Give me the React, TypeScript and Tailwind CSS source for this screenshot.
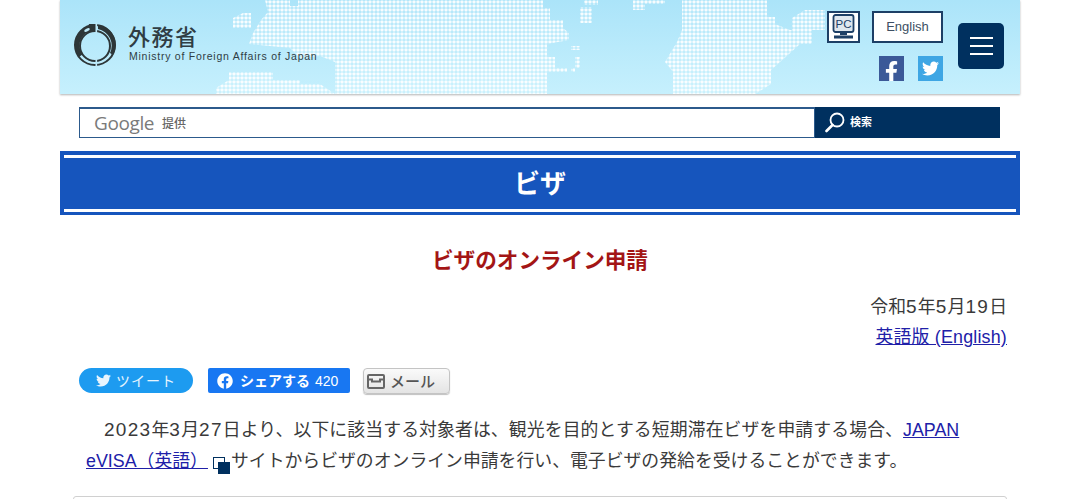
import { FaFacebook, FaFacebookF, FaTwitter } from 'react-icons/fa';

const jp = 'font-["Liberation_Sans","Noto_Sans_CJK_JP",sans-serif]';

function Num({ children }: { children: string }) {
  return <span className="text-[19px] leading-none tracking-[1.3px]">{children}</span>;
}

function WorldMap() {
  return (
    <svg className="absolute inset-0" width="960" height="94" viewBox="60 0 960 94">
      <defs>
        <pattern id="dots" x="0" y="0" width="4" height="4" patternUnits="userSpaceOnUse">
          <rect x="0.5" y="0.5" width="3" height="3" rx="0.8" fill="#fff" fillOpacity="0.9" />
        </pattern>
      </defs>
      <g fill="url(#dots)">
        <path d="M265 0H290V6H298V0H543V8H550V20H563V28L569 33V40L547 44V94H335V62L320 56L300 58L290 48L249 44L253 33L261 20L268 12Z" />
        <path d="M229 72H273V80H300V84H320L335 94H216V88L229 80Z" />
        <path d="M682 0H767V17H775V24L790 30H812V44H800L788 55L771 70V84L755 94H673V72L665 62L677 42L682 30Z" />
        <path d="M792 18L805 10H825V30H792Z" />
        <path d="M580 7H592V23H580Z" />
        <path d="M584 0H598V5H584Z" />
        <path d="M633 0H665V4H645V10H633Z" />
        <path d="M233 18L243 13H251V28H233Z" />
        <path d="M547 57H555V68H567V72H547Z" />
        <path d="M571 68H580V57H575V72H571Z" />
        <path d="M571 46H580V50H571Z" />
      </g>
    </svg>
  );
}

function Logo() {
  return (
    <svg width="44" height="46" viewBox="0 0 44 46" className="shrink-0">
      <circle cx="22" cy="24" r="20" fill="none" stroke="#2d3638" strokeWidth="2" />
      <path d="M22 4A20 20 0 0 0 6 36L10 33A14 14 0 0 1 22 10Z" fill="#2d3638" />
      <path d="M25 4A20 20 0 0 1 40 34L37 32A17 17 0 0 0 25 8Z" fill="#2d3638" />
      <circle cx="22" cy="25" r="15" fill="none" stroke="#2d3638" strokeWidth="2" />
      <path d="M16 3H23V9L13 12Z" fill="#2d3638" />
      <rect x="22.5" y="1" width="1.6" height="12" fill="#bde8f7" />
      <rect x="22.5" y="36" width="1.6" height="10" fill="#bde8f7" />
      <ellipse cx="14" cy="9" rx="3" ry="1.4" fill="#bde8f7" transform="rotate(-25 14 9)" />
    </svg>
  );
}

function MailIcon() {
  return (
    <svg width="18" height="15" viewBox="0 0 18 15" fill="none" stroke="#666" strokeWidth="2">
      <rect x="1" y="1" width="16" height="13" rx="1" />
      <path d="M1 5.5H5V7.5H13V5.5H17" />
    </svg>
  );
}

export default function App() {
  return (
    <div className={`h-[499px] overflow-hidden bg-white text-[#3a3a3a] ${jp}`}>
      <div className="mx-auto w-[960px]">
        <header className="relative flex h-[94px] items-start justify-between overflow-hidden bg-gradient-to-b from-[#abe4f9] to-[#c6f0fd] shadow-[0_1px_2px_rgba(0,0,0,0.3)]">
          <WorldMap />
          <div className="relative ml-[13px] mt-[21px] flex items-center gap-[11px]">
            <Logo />
            <div className="text-[#2f3d44]">
              <div className='-mt-[3px] font-["Noto_Sans_CJK_JP",sans-serif] text-[22px] font-medium leading-[26px] tracking-[1.5px]'>外務省</div>
              <div className="ml-[1px] mt-[1px] text-[10.5px] leading-[14px] tracking-[0.75px]">Ministry of Foreign Affairs of Japan</div>
            </div>
          </div>
          <div className="relative mr-[16px] mt-[11px] flex gap-[15px]">
            <div className="flex flex-col items-end gap-[13px]">
              <div className="flex gap-[12px]">
                <a className="flex h-[32px] w-[33px] items-center justify-center border-2 border-[#1d3f66] bg-white">
                  <svg width="25" height="27" viewBox="0 0 25 27">
                    <rect x="2.5" y="1" width="20" height="17" rx="2" fill="#dfe7ee" stroke="#1d3f66" strokeWidth="1.8" />
                    <text x="12.5" y="14" textAnchor="middle" fontSize="11.5" fill="#1d3f66" fontFamily="Liberation Sans">PC</text>
                    <rect x="9" y="18" width="7" height="3" fill="#1d3f66" />
                    <rect x="3" y="21.5" width="19" height="3" fill="#1d3f66" />
                  </svg>
                </a>
                <a className="flex h-[32px] w-[71px] items-center justify-center border-2 border-[#1d3f66] bg-white text-[13px] text-[#3d4f63]">English</a>
              </div>
              <div className="flex gap-[14px]">
                <a className="flex h-[25px] w-[25px] items-end justify-center overflow-hidden bg-[#3b5998] text-white">
                  <FaFacebookF className="h-[21px] w-[21px] translate-y-[1px]" />
                </a>
                <a className="flex h-[25px] w-[25px] items-center justify-center bg-[#3ea6e4] text-white">
                  <FaTwitter className="h-[17px] w-[17px]" />
                </a>
              </div>
            </div>
            <button className="mt-[12px] flex h-[46px] w-[46px] flex-col items-center justify-center gap-[6px] rounded-[5px] bg-[#00305f]">
              <span className="h-[2px] w-[23px] bg-white" />
              <span className="h-[2px] w-[23px] bg-white" />
              <span className="h-[2px] w-[23px] bg-white" />
            </button>
          </div>
        </header>

        <form className="ml-[19px] mr-[20px] mt-[13px] flex h-[31px]">
          <div className="flex flex-1 items-center gap-[8px] border border-t-2 border-[#2c5a8c] bg-white pl-[14px]">
            <span className='font-["Open_Sans",sans-serif] text-[19px] tracking-[-0.4px] text-[#7a7a7a]'>Google</span>
            <span className='font-["Noto_Sans_CJK_JP",sans-serif] text-[12px] font-medium text-[#666]'>提供</span>
          </div>
          <button className="flex w-[185px] items-center gap-[5px] bg-[#00305f] pl-[10px] text-[11px] font-bold text-white">
            <svg width="20" height="21" viewBox="0 0 20 21" fill="none" stroke="#fff">
              <circle cx="12" cy="8" r="6.5" strokeWidth="1.8" />
              <path d="M7.5 13L1.5 19" strokeWidth="2.6" strokeLinecap="round" />
            </svg>
            検索
          </button>
        </form>

        <div className="mt-[13px] bg-[#1655bd] px-[4px] pb-[3px] pt-[4px]">
          <h1 className="flex h-[57px] items-center justify-center border-y-[3px] border-white pt-[1px] text-[26px] font-bold text-white">ビザ</h1>
        </div>

        <h2 className="mt-[30px] text-center text-[21.6px] font-bold leading-[32px] text-[#a31515]">ビザのオンライン申請</h2>

        <div className="mt-[15px] pl-[26px] pr-[13px] text-[17.85px] leading-[30px]">
          <p className="text-right">令和<Num>5</Num>年<Num>5</Num>月<Num>19</Num>日</p>
          <p className="text-right tracking-[0.2px]"><a className="text-[#2020a8] underline">英語版 (English)</a></p>

          <div className="-ml-[7px] mt-[16px] flex h-[26px] items-start">
            <a className="flex h-[25px] w-[114px] items-center justify-center gap-[5px] rounded-full bg-[#1d9bf0] text-[14px] leading-none tracking-[1px] text-white/90">
              <FaTwitter className="h-[15px] w-[15px]" />
              ツイート
            </a>
            <a className="ml-[15px] flex h-[25px] w-[142px] items-center gap-[7px] rounded-[2px] bg-[#1877f2] pl-[9px] text-[14px] font-bold leading-none text-white">
              <FaFacebook className="h-[16px] w-[16px]" />
              シェアする
              <span className="-ml-[2px] text-[14px] font-normal">420</span>
            </a>
            <a className="ml-[13px] flex h-[26px] w-[87px] items-center gap-[5px] rounded-[4px] border border-[#c4c4c4] bg-gradient-to-b from-[#fafafa] to-[#e4e4e4] pl-[3px] text-[15px] font-medium leading-none text-[#555] shadow-[0_1px_1px_rgba(0,0,0,0.25)]">
              <MailIcon />
              メール
            </a>
          </div>

          <p className="mt-[21px] w-[880px] indent-[18px] leading-[31px]">
            <Num>2023</Num>年<Num>3</Num>月<Num>27</Num><span className="tracking-[0.1px]">日より、以下に該当する対象者は、観光を目的とする短期滞在ビザを申請する場合、</span><a className="text-[#2020a8] underline">JAPAN eVISA（英語）</a>
            <span className="relative ml-[5px] mr-[1px] inline-block h-[17px] w-[17px] align-[-7px]">
              <span className="absolute left-0 top-0 h-[12px] w-[12px] border border-[#00305f]" />
              <span className="absolute bottom-0 right-0 h-[12px] w-[12px] bg-[#00305f]" />
            </span>
            サイトからビザのオンライン申請を行い、電子ビザの発給を受けることができます。
          </p>

          <div className="-ml-[13px] mt-[19px] h-[40px] rounded-t-[3px] border border-[#d0d0d0]" />
        </div>
      </div>
    </div>
  );
}
